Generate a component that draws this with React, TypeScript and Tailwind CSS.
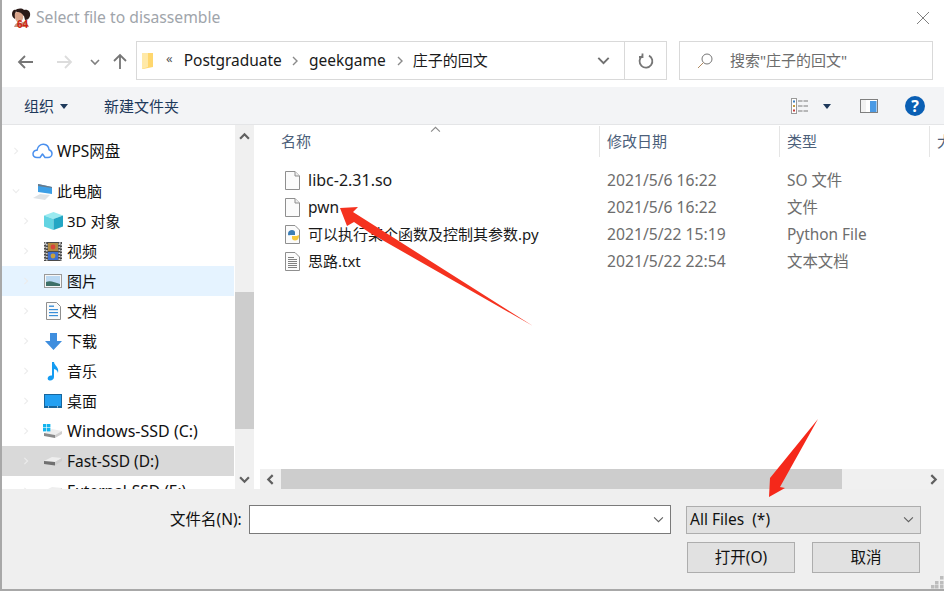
import React from "react";

const FONT = { fontFamily: '"Noto Sans", "Noto Sans CJK SC", sans-serif' };

function Avatar() {
  return (
    <svg width="20" height="20" viewBox="0 0 20 20" className="shrink-0">
      <path d="M4 3 C6 0 11 0 13 2 C17 1 20 4 19 8 C18 11 16 12 14 12 L13 8 L8 5 Z" fill="#2a1a18" />
      <path d="M1 6 C1 3 3 1 5 2 L4 11 C2 10 1 8 1 6Z" fill="#2a1a18" />
      <path d="M4 5 C6 3 10 4 12 7 C13 10 11 14 8 15 C5 14 3 10 4 5Z" fill="#d9a58c" />
      <path d="M3 19 C4 15 7 14 9 15 L15 13 L18 19Z" fill="#c9907c" />
      <text x="6" y="19.5" fontSize="10" fill="#cf1f10" fontWeight="700" fontFamily="Liberation Sans, sans-serif">64</text>
    </svg>
  );
}

function Chevron({ dir, color = "#ececec", size = 8, sw = 1.4 }: { dir: "r" | "d" | "u" | "l"; color?: string; size?: number; sw?: number }) {
  const d = { r: "M3 1 L7 5 L3 9", d: "M1 3 L5 7 L9 3", u: "M1 7 L5 3 L9 7", l: "M7 1 L3 5 L7 9" }[dir];
  return (
    <svg width={size} height={size} viewBox="0 0 10 10" className="shrink-0">
      <path d={d} fill="none" stroke={color} strokeWidth={sw} />
    </svg>
  );
}

function Arrow({ dir, color }: { dir: "l" | "r" | "u"; color: string }) {
  const d = { l: "M16 9 H2 M8 3 L2 9 L8 15", r: "M0 9 H14 M8 3 L14 9 L8 15", u: "M8 16 V2 M2 8 L8 2 L14 8" }[dir];
  return (
    <svg width="16" height="18" viewBox="0 0 16 18" className="shrink-0">
      <path d={d} fill="none" stroke={color} strokeWidth="1.8" />
    </svg>
  );
}

function Caret() {
  return (
    <svg width="8" height="5" viewBox="0 0 8 5" className="shrink-0">
      <path d="M0 0 H8 L4 5 Z" fill="#1e395b" />
    </svg>
  );
}

const side: Record<string, React.ReactNode> = {
  cloud: (
    <svg width="21" height="16" viewBox="0 0 21 16">
      <path d="M5 14.5 C2 14.5 1 12.5 1 10.8 C1 8.5 3 7 5 7.3 C5.5 3.5 8.5 1 11.5 1.2 C15 1.5 16.8 4 17 6.8 C19 7.5 20 9 20 10.8 C20 13 18 14.5 16 14.5 H13 L10.5 11 L8 14.5 Z" fill="none" stroke="#4a90ee" strokeWidth="1.5" strokeLinejoin="round" />
    </svg>
  ),
  pc: (
    <svg width="21" height="17" viewBox="0 0 21 17">
      <path d="M6 1 L20 4 V11 L6 9 Z" fill="#3d9fe6" />
      <path d="M6 1 L20 4 V5 L6 3 Z" fill="#6b7a88" />
      <path d="M1 15 L8 11 L18 12 L13 17 Z" fill="#dfe3e6" />
    </svg>
  ),
  cube: (
    <svg width="19" height="18" viewBox="0 0 19 18">
      <path d="M9.5 0 L19 3.5 L9.5 7 L0 3.5 Z" fill="#9aeaf0" />
      <path d="M0 3.5 L9.5 7 V18 L0 14.5 Z" fill="#62d4e2" />
      <path d="M19 3.5 L9.5 7 V18 L19 14.5 Z" fill="#23a6c4" />
    </svg>
  ),
  video: (
    <svg width="18" height="19" viewBox="0 0 18 19">
      <rect width="18" height="19" fill="#4a4a4a" />
      <rect x="0.8" y="1" width="2" height="17" fill="none" stroke="#ddd" strokeDasharray="1.5 1.5" strokeWidth="1.4" />
      <rect x="15.2" y="1" width="2" height="17" fill="none" stroke="#ddd" strokeDasharray="1.5 1.5" strokeWidth="1.4" />
      <rect x="4" y="1" width="10" height="8" fill="#b28a42" />
      <rect x="4" y="10" width="10" height="8" fill="#3d6fd0" />
      <circle cx="9" cy="5" r="2.4" fill="#d8453a" />
      <circle cx="9" cy="14" r="2.4" fill="#c9a13a" />
    </svg>
  ),
  picture: (
    <svg width="18" height="14" viewBox="0 0 18 14">
      <rect x="0.5" y="0.5" width="17" height="13" fill="#f7f7f7" stroke="#9a9a9a" />
      <rect x="2" y="2" width="14" height="10" fill="#bcd9f2" />
      <path d="M2 8 C6 6 10 8 16 10 V12 H2 Z" fill="#3e7068" />
    </svg>
  ),
  doc: (
    <svg width="15" height="18" viewBox="0 0 15 18">
      <path d="M0.5 0.5 H10.5 L14.5 4.5 V17.5 H0.5 Z" fill="#fafafa" stroke="#8f8f8f" />
      <rect x="3" y="3.5" width="5" height="1.4" fill="#3a8ed8" />
      <rect x="3" y="7" width="9" height="1.2" fill="#3a8ed8" />
      <rect x="3" y="10" width="9" height="1.2" fill="#3a8ed8" />
      <rect x="3" y="13" width="9" height="1.2" fill="#3a8ed8" />
    </svg>
  ),
  down: (
    <svg width="17" height="17" viewBox="0 0 17 17">
      <path d="M5 0 H12 V8 H17 L8.5 17 L0 8 H5 Z" fill="#3f8ede" />
    </svg>
  ),
  music: (
    <svg width="13" height="20" viewBox="0 0 13 20">
      <path d="M5 1 H7 C7.5 5 12.5 6 11 12 C10.5 9.5 9 8.5 7 8 V16 C7 18.5 4.5 20 2.5 19.5 C0.5 19 0 17 1.5 15.5 C2.5 14.5 4 14.2 5 14.6 Z" fill="#149cf2" />
    </svg>
  ),
  desktop: (
    <svg width="18" height="14" viewBox="0 0 18 14">
      <rect width="18" height="14" fill="#17669e" />
      <rect x="1" y="1" width="16" height="11" fill="#23a0f2" />
      <rect x="4" y="12.4" width="1" height="1" fill="#fff" />
      <rect x="13" y="12.4" width="1" height="1" fill="#fff" />
    </svg>
  ),
  win: (
    <svg width="20" height="15" viewBox="0 0 20 15">
      <path d="M1 9 L9 5 L19 7 L12 11 Z" fill="#eeeeee" />
      <path d="M1 9 L12 11 V14 L1 12 Z" fill="#8a8a8a" />
      <path d="M12 11 L19 7 V10 L12 14 Z" fill="#cfcfcf" />
      <rect x="0" y="0" width="3.4" height="3.4" fill="#12b4ee" />
      <rect x="4" y="0" width="3.4" height="3.4" fill="#12b4ee" />
      <rect x="0" y="4" width="3.4" height="3.4" fill="#12b4ee" />
      <rect x="4" y="4" width="3.4" height="3.4" fill="#12b4ee" />
    </svg>
  ),
  ssd: (
    <svg width="19" height="10" viewBox="0 0 19 10">
      <path d="M0 5 L8 1 L18 2 L11 6 Z" fill="#eeeeee" />
      <path d="M0 5 L11 6 V9.5 L0 8 Z" fill="#707070" />
      <path d="M11 6 L18 2 V5 L11 9.5 Z" fill="#cfcfcf" />
    </svg>
  ),
};

function NavRow({ label, icon, top, selected, hover, open, size = "text-[15px]" }: { label: string; icon: string; top?: boolean; selected?: boolean; hover?: boolean; open?: boolean; size?: string }) {
  return (
    <div className={`h-[30px] shrink-0 flex items-center text-[#111] ${selected ? "bg-[#d9d9d9]" : hover ? "bg-[#e5f3ff]" : ""} ${top ? "pl-[10px]" : "pl-[20px]"}`}>
      <span className="w-[8px] flex justify-center"><Chevron dir={open ? "d" : "r"} /></span>
      <span className={`flex justify-center ${top ? "w-[21px] ml-[12px]" : "w-[20px] ml-[13px]"}`}>{side[icon]}</span>
      <span className={`ml-[4px] whitespace-nowrap leading-[22px] ${size}`}>{label}</span>
    </div>
  );
}

const blank = (
  <svg width="15" height="19" viewBox="0 0 15 19">
    <path d="M0.5 0.5 H10 L14.5 5 V18.5 H0.5 Z" fill="#fbfbfb" stroke="#8f8f8f" />
    <path d="M10 0.5 V5 H14.5" fill="#ececec" stroke="#8f8f8f" />
  </svg>
);
const py = (
  <svg width="16" height="19" viewBox="0 0 16 19">
    <path d="M0.5 0.5 H10 L14.5 5 V18.5 H0.5 Z" fill="#fbfbfb" stroke="#8f8f8f" />
    <path d="M3 9 C3 6 5 5 7 5 C9 5 10 6 10 7.5 V10 H5.5 C4 10 3 11 3 9Z" fill="#3d7eb5" />
    <path d="M14 11 C14 14 12 15.5 10 15.5 C8 15.5 7 14.5 7 13 V11 H11.5 C13 11 14 9 14 11Z" fill="#f6c93c" />
  </svg>
);
const txt = (
  <svg width="15" height="19" viewBox="0 0 15 19">
    <path d="M0.5 0.5 H10 L14.5 5 V18.5 H0.5 Z" fill="#fbfbfb" stroke="#8f8f8f" />
    <path d="M3 5.5 H9 M3 7.5 H12 M3 9.5 H12 M3 11.5 H12 M3 13.5 H12 M3 15.5 H12" stroke="#7f7f7f" strokeWidth="1" />
  </svg>
);

const files = [
  { icon: blank, name: "libc-2.31.so", size: "text-[16px]", date: "2021/5/6 16:22", type: "SO 文件" },
  { icon: blank, name: "pwn", size: "text-[15.5px]", date: "2021/5/6 16:22", type: "文件" },
  { icon: py, name: "可以执行某个函数及控制其参数.py", size: "text-[15px]", date: "2021/5/22 15:19", type: "Python File" },
  { icon: txt, name: "思路.txt", size: "text-[15px]", date: "2021/5/22 22:54", type: "文本文档" },
];

function Dots() {
  return (
    <svg width="13" height="13" viewBox="0 0 13 13" className="absolute right-0 bottom-0">
      {[[9, 0], [9, 5], [4, 5], [9, 9], [4, 9], [0, 9]].map(([x, y], i) => (
        <rect key={i} x={x} y={y} width="3.5" height="3.5" fill="#bdbdbd" />
      ))}
    </svg>
  );
}

export default function App() {
  return (
    <div style={FONT} className="relative w-[944px] h-[591px] overflow-hidden bg-white flex flex-col border-l-2 border-b-2 border-[#a8a8a8]">
      {/* title */}
      <div className="h-[38px] shrink-0 flex items-center pl-[9px] pr-[14px] pb-[2px]">
        <Avatar />
        <span className="ml-[5px] text-[15.7px] text-[#9fa5ab]">Select file to disassemble</span>
        <svg width="14" height="14" viewBox="0 0 14 14" className="ml-auto">
          <path d="M1 1 L13 13 M13 1 L1 13" stroke="#808080" strokeWidth="1" />
        </svg>
      </div>

      {/* nav */}
      <div className="h-[49px] shrink-0 flex pt-[3px] pl-[15px] pr-[11px]">
        <div className="h-[39px] w-[119px] shrink-0 flex items-center pt-[2px]">
          <Arrow dir="l" color="#767676" />
          <span className="ml-[24px]"><Arrow dir="r" color="#dcdcdc" /></span>
          <span className="ml-[17px]"><Chevron dir="d" color="#808080" size={10} sw={1.6} /></span>
          <span className="ml-[12px]"><Arrow dir="u" color="#767676" /></span>
        </div>
        <div className="h-[39px] w-[531px] shrink-0 border border-[#d9d9d9] flex items-center text-[15.5px] text-[#1a1a1a]">
          <svg width="12" height="17" viewBox="0 0 12 17" className="ml-[5px] shrink-0">
            <path d="M0 1 H11 V15 L1 17 H0 Z" fill="#ffd76e" />
            <path d="M0 1 H6 V15 L0 17 Z" fill="#ffe9a8" />
          </svg>
          <span className="ml-[12px] text-[#555] text-[13px] leading-none pb-[4px]">«</span>
          <span className="ml-[11px]">Postgraduate</span>
          <span className="ml-[8px]"><Chevron dir="r" color="#8a8a8a" size={10} /></span>
          <span className="ml-[9px]">geekgame</span>
          <span className="ml-[9px]"><Chevron dir="r" color="#8a8a8a" size={10} /></span>
          <span className="ml-[8px] text-[15px]">庄子的回文</span>
          <span className="ml-auto mr-[14px]"><Chevron dir="d" color="#707070" size={13} sw={1.5} /></span>
          <div className="h-full w-[42px] border-l border-[#d9d9d9] flex items-center justify-center shrink-0">
            <svg width="16" height="16" viewBox="0 0 16 16">
              <path d="M4 3.2 A6.4 6.4 0 1 0 11 2.6 M4.5 0.5 V4 H1" fill="none" stroke="#767676" strokeWidth="1.8" />
            </svg>
          </div>
        </div>
        <div className="ml-[12px] h-[39px] flex-1 border border-[#d9d9d9] flex items-center text-[15px] text-[#6d6d6d]">
          <svg width="16" height="16" viewBox="0 0 16 16" className="ml-[17px] shrink-0">
            <circle cx="10" cy="6" r="5" fill="none" stroke="#767676" strokeWidth="1" />
            <path d="M6.4 9.6 L1 15" stroke="#b08a60" strokeWidth="1" />
          </svg>
          <span className="ml-[17px]">搜索"庄子的回文"</span>
        </div>
      </div>

      {/* toolbar */}
      <div className="h-[38px] shrink-0 bg-[#f3f4f6] border-b border-[#e4e5e7] flex items-center text-[15px] text-[#1e395b] pl-[22px] pr-[19px] pt-[1px]">
        <span>组织</span>
        <span className="ml-[6px]"><Caret /></span>
        <span className="ml-[36px]">新建文件夹</span>
        <svg width="18" height="16" viewBox="0 0 18 16" className="ml-auto shrink-0">
          <rect x="0.5" y="0.5" width="5" height="15" fill="#fff" stroke="#9a9a9a" />
          <rect x="2" y="2.5" width="2" height="2" fill="#3b7fc4" />
          <rect x="2" y="7" width="2" height="2" fill="#c49a3b" />
          <rect x="2" y="11.5" width="2" height="2" fill="#c43b3b" />
          <path d="M7 3 H18 M7 8 H18 M7 13 H18" stroke="#7a7a7a" strokeWidth="1" strokeDasharray="4.5 1" />
        </svg>
        <span className="ml-[14px]"><Caret /></span>
        <svg width="18" height="14" viewBox="0 0 18 14" className="ml-[29px] shrink-0">
          <rect x="0.5" y="0.5" width="17" height="13" fill="#fff" stroke="#7f7f7f" />
          <rect x="1" y="1" width="5" height="12" fill="#f2f2f2" />
          <rect x="10" y="2" width="6.5" height="11" fill="#4b9ae4" />
        </svg>
        <div className="ml-[27px] w-[20px] h-[20px] rounded-full bg-[#0a5fb4] flex items-center justify-center text-white text-[16px] font-bold shrink-0">?</div>
      </div>

      {/* main */}
      <div className="flex-1 min-h-0 flex">
        <div className="w-[233px] shrink-0 overflow-hidden pt-[11px] pr-[1px] flex flex-col">
          <NavRow top label="WPS网盘" icon="cloud" size="text-[15.5px]" />
          <div className="h-[10px] shrink-0" />
          <NavRow top open label="此电脑" icon="pc" />
          <NavRow label="3D 对象" icon="cube" />
          <NavRow label="视频" icon="video" />
          <NavRow hover label="图片" icon="picture" />
          <NavRow label="文档" icon="doc" />
          <NavRow label="下载" icon="down" />
          <NavRow label="音乐" icon="music" />
          <NavRow label="桌面" icon="desktop" />
          <NavRow label="Windows-SSD (C:)" icon="win" size="text-[16px]" />
          <NavRow selected label="Fast-SSD (D:)" icon="ssd" size="text-[15.5px]" />
          <NavRow label="External-SSD (E:)" icon="ssd" size="text-[15.5px]" />
        </div>
        <div className="w-[19px] shrink-0 bg-[#f0f0f0] flex flex-col items-center">
          <div className="h-[20px] pt-[6px] flex justify-center"><Chevron dir="u" color="#606060" size={11} sw={2} /></div>
          <div className="mt-[147px] h-[137px] w-full bg-[#cdcdcd]" />
          <div className="mt-auto h-[20px] flex justify-center items-center"><Chevron dir="d" color="#606060" size={11} sw={2} /></div>
        </div>
        <div className="w-[6px] shrink-0" />

        <div className="relative flex-1 min-w-0 overflow-hidden flex flex-col">
          <div className="h-[32px] shrink-0 flex text-[15px] text-[#4c607a] pt-[1px]">
            <div className="w-[340px] shrink-0 pl-[21px] flex items-center border-r border-[#e5e5e5]">名称</div>
            <div className="w-[180px] shrink-0 pl-[7px] flex items-center border-r border-[#e5e5e5]">修改日期</div>
            <div className="w-[150px] shrink-0 pl-[7px] flex items-center border-r border-[#e5e5e5]">类型</div>
            <div className="pl-[7px] flex items-center whitespace-nowrap">大小</div>
          </div>
          <div className="absolute left-[170px] top-[-1px]"><Chevron dir="u" color="#8a8a8a" size={11} sw={1} /></div>
          <div className="flex-1 min-h-0 pt-[10px]">
            {files.map((f) => (
              <div key={f.name} className="h-[27px] flex items-center">
                <div className="w-[340px] shrink-0 pl-[25px] flex items-center text-[#1a1a1a]">
                  <span className="w-[23px] shrink-0">{f.icon}</span>
                  <span className={`whitespace-nowrap leading-[21px] ${f.size}`}>{f.name}</span>
                </div>
                <div className="w-[180px] shrink-0 pl-[7px] text-[#6d6d6d] text-[15.7px] leading-[21px]">{f.date}</div>
                <div className="pl-[7px] text-[#6d6d6d] text-[15.4px] leading-[21px]">{f.type}</div>
              </div>
            ))}
          </div>
          <div className="h-[20px] shrink-0 bg-[#f0f0f0] flex items-center">
            <div className="w-[21px] flex justify-center"><Chevron dir="l" color="#606060" size={11} sw={2} /></div>
            <div className="w-[561px] h-full bg-[#cdcdcd]" />
            <div className="ml-auto w-[21px] flex justify-center"><Chevron dir="r" color="#606060" size={11} sw={2} /></div>
          </div>
        </div>
      </div>

      {/* bottom */}
      <div className="relative h-[100px] shrink-0 bg-[#efefef] flex flex-col text-[15.5px] text-[#111] pl-[168px] pt-[16px]">
        <div className="flex items-center">
          <span className="w-[71px] whitespace-nowrap">文件名(N):</span>
          <div className="ml-[8px] w-[422px] h-[29px] bg-white border border-[#7a7a7a] flex items-center justify-end pr-[6px]">
            <Chevron dir="d" color="#606060" size={11} sw={1} />
          </div>
          <div className="ml-[15px] w-[235px] h-[28px] bg-[#e1e1e1] border border-[#adadad] flex items-center justify-between pl-[3px] pr-[6px]">
            <span className="whitespace-pre">All Files  (*)</span>
            <Chevron dir="d" color="#606060" size={11} sw={1} />
          </div>
        </div>
        <div className="flex mt-[8px] ml-[517px] gap-[17px]">
          <div className="w-[108px] h-[31px] bg-[#e1e1e1] border border-[#adadad] flex items-center justify-center">打开(O)</div>
          <div className="w-[108px] h-[31px] bg-[#e1e1e1] border border-[#adadad] flex items-center justify-center">取消</div>
        </div>
        <Dots />
      </div>

      {/* annotation arrows */}
      <svg width="944" height="591" viewBox="0 0 944 591" className="absolute left-[-2px] top-0 pointer-events-none">
        <polygon points="340,208 358,207 353,212 533,326 370,233 354,222 347,226" fill="#f5321f" />
        <polygon points="769,497 770,478 818,419 780,487 785,488" fill="#f5281a" />
      </svg>
    </div>
  );
}
